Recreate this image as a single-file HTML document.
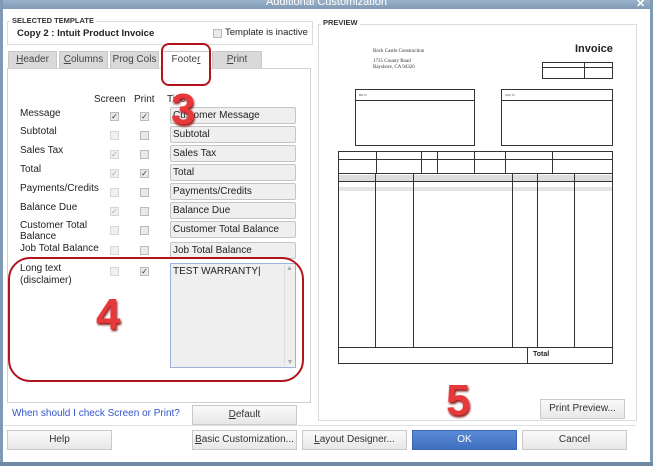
<!DOCTYPE html>
<html><head><meta charset="utf-8"><style>
*{box-sizing:border-box;margin:0;padding:0}
body{width:653px;height:466px;overflow:hidden;background:#fff;font-family:"Liberation Sans",Arial,sans-serif;font-size:10px;color:#222;position:relative}
.a{position:absolute}
.title{left:0;top:0;width:653px;height:9px;background:linear-gradient(#9cb3c9,#7f9ab5);}
.frameL{left:0;top:0;width:3px;height:466px;background:#7f9ab5}
.frameR{right:0;top:0;width:3px;height:466px;background:#7f9ab5}
.frameB{left:0;bottom:0;width:653px;height:4px;background:#6f8aa5}
.grp{border:1px solid #dcdcdc}
.lbl{font-size:7.5px;font-weight:bold;background:#fff;padding:0 2px;color:#333}
.tab{top:51px;height:17px;background:#d9d9d9;border:1px solid #c8c8c8;border-bottom:none;text-align:center;font-size:10px;line-height:16px;color:#444}
.cb{width:9px;height:9px;border:1px solid #bbb;background:#e9e9e9;font-size:8px;line-height:7px;text-align:center;color:#333}
.cb.d{background:#f0f0f0;border-color:#d6d6d6;color:#aaa}
.fld{left:170px;width:126px;height:17px;border:1px solid #c5c5c5;background:#efefef;border-radius:2px;padding-left:2px;line-height:15px;font-size:10px}
.rl{left:20px;font-size:10px}
.btn{height:20px;border:1px solid #c9c9c9;background:linear-gradient(#fafafa,#e8e8e8);text-align:center;line-height:18px;font-size:10px;color:#333}
.num{font-weight:bold;color:#e8383a;font-size:44px;text-shadow:1px 2px 2px #8a1a1a;font-family:"Liberation Sans",sans-serif}
.t{font-size:3px;color:#555;text-align:center}
.ln{background:#333}
</style></head><body>
<div class="a title"></div>
<div class="a" style="left:0;top:-4px;width:653px;text-align:center;color:#fff;font-size:11px">Additional Customization</div>
<div class="a" style="left:636px;top:-3px;color:#fff;font-size:11px;font-weight:bold">✕</div>
<div class="a frameL"></div><div class="a frameR"></div><div class="a frameB"></div>

<div class="a grp" style="left:7px;top:21px;width:306px;height:24px"></div>
<div class="a lbl" style="left:10px;top:16px">SELECTED TEMPLATE</div>
<div class="a" style="left:17px;top:28px;font-weight:bold;font-size:9.5px">Copy 2 : Intuit Product Invoice</div>
<div class="a cb" style="left:213px;top:29px"></div>
<div class="a" style="left:225px;top:27px;font-size:9.5px">Template is inactive</div>

<div class="a tab" style="left:8px;width:49px"><u>H</u>eader</div>
<div class="a tab" style="left:59px;width:49px"><u>C</u>olumns</div>
<div class="a tab" style="left:110px;width:49px">Pro<u>g</u> Cols</div>
<div class="a tab" style="left:161px;width:50px;background:#fff;height:18px">Foote<u>r</u></div>
<div class="a tab" style="left:212px;width:50px"><u>P</u>rint</div>
<div class="a grp" style="left:7px;top:68px;width:304px;height:335px;border-color:#d0d0d0"></div>
<div class="a" style="left:162px;top:67px;width:48px;height:2px;background:#fff"></div>

<div class="a" style="left:94px;top:94px">Screen</div>
<div class="a" style="left:134px;top:94px">Print</div>
<div class="a" style="left:167px;top:94px">Title</div>

<div class="a rl" style="top:108px">Message</div>
<div class="a rl" style="top:126px">Subtotal</div>
<div class="a rl" style="top:145px">Sales Tax</div>
<div class="a rl" style="top:164px">Total</div>
<div class="a rl" style="top:183px">Payments/Credits</div>
<div class="a rl" style="top:202px">Balance Due</div>
<div class="a rl" style="top:220px;line-height:11px">Customer Total<br>Balance</div>
<div class="a rl" style="top:243px">Job Total Balance</div>
<div class="a rl" style="top:263px;line-height:12px">Long text<br>(disclaimer)</div>

<div class="a cb" style="left:110px;top:112px">✓</div><div class="a cb" style="left:140px;top:112px">✓</div>
<div class="a cb d" style="left:110px;top:131px"></div><div class="a cb" style="left:140px;top:131px"></div>
<div class="a cb d" style="left:110px;top:150px">✓</div><div class="a cb" style="left:140px;top:150px"></div>
<div class="a cb d" style="left:110px;top:169px">✓</div><div class="a cb" style="left:140px;top:169px">✓</div>
<div class="a cb d" style="left:110px;top:188px"></div><div class="a cb" style="left:140px;top:188px"></div>
<div class="a cb d" style="left:110px;top:207px">✓</div><div class="a cb" style="left:140px;top:207px"></div>
<div class="a cb d" style="left:110px;top:226px"></div><div class="a cb" style="left:140px;top:226px"></div>
<div class="a cb d" style="left:110px;top:246px"></div><div class="a cb" style="left:140px;top:246px"></div>
<div class="a cb d" style="left:110px;top:267px"></div><div class="a cb" style="left:140px;top:267px">✓</div>

<div class="a fld" style="top:107px">Customer Message</div>
<div class="a fld" style="top:126px">Subtotal</div>
<div class="a fld" style="top:145px">Sales Tax</div>
<div class="a fld" style="top:164px">Total</div>
<div class="a fld" style="top:183px">Payments/Credits</div>
<div class="a fld" style="top:202px">Balance Due</div>
<div class="a fld" style="top:221px">Customer Total Balance</div>
<div class="a fld" style="top:242px">Job Total Balance</div>
<div class="a" style="left:170px;top:263px;width:126px;height:105px;border:1px solid #9db3d6;background:#efefef;padding:2px 2px;font-size:10px">TEST WARRANTY|</div>
<div class="a" style="left:284px;top:265px;width:10px;height:101px;border-left:1px solid #ddd;color:#aaa;font-size:7px;text-align:center">▲<div style="position:absolute;bottom:0;width:10px">▼</div></div>

<div class="a" style="left:8px;top:257px;width:296px;height:125px;border:2px solid #b3141c;border-radius:22px"></div>
<div class="a" style="left:161px;top:43px;width:50px;height:43px;border:2px solid #b3141c;border-radius:8px"></div>
<div class="a num" style="left:171px;top:85px">3</div>
<div class="a num" style="left:96px;top:290px">4</div>
<div class="a num" style="left:446px;top:376px">5</div>

<div class="a" style="left:12px;top:408px;color:#3355cc;font-size:10px">When should I check Screen or Print?</div>
<div class="a btn" style="left:192px;top:405px;width:105px"><u>D</u>efault</div>

<!-- preview -->
<div class="a grp" style="left:318px;top:24px;width:319px;height:397px"></div>
<div class="a lbl" style="left:321px;top:18px">PREVIEW</div>
<div class="a" style="left:373px;top:49px;font-family:'Liberation Serif',serif;font-size:5px;line-height:6px;color:#333">Rock Castle Construction</div>
<div class="a" style="left:373px;top:59px;font-family:'Liberation Serif',serif;font-size:5px;line-height:6px;color:#333">1735 County Road<br>Bayshore, CA 94326</div>
<div class="a" style="left:575px;top:43px;font-weight:bold;font-size:11px">Invoice</div>
<div class="a" style="left:542px;top:62px;width:71px;height:17px;border:1px solid #333"></div>
<div class="a ln" style="left:542px;top:67px;width:71px;height:1px"></div>
<div class="a ln" style="left:584px;top:62px;width:1px;height:17px"></div>
<div class="a" style="left:355px;top:89px;width:120px;height:57px;border:1px solid #333"></div>
<div class="a ln" style="left:355px;top:100px;width:120px;height:1px"></div>
<div class="a" style="left:501px;top:89px;width:112px;height:57px;border:1px solid #333"></div>
<div class="a ln" style="left:501px;top:100px;width:112px;height:1px"></div>
<div class="a t" style="left:359px;top:93px">Bill To</div>
<div class="a t" style="left:505px;top:93px">Ship To</div>
<div class="a" style="left:338px;top:151px;width:275px;height:213px;border:1px solid #333"></div>
<div class="a ln" style="left:338px;top:159px;width:275px;height:1px"></div>
<div class="a ln" style="left:338px;top:173px;width:275px;height:1px"></div>
<div class="a" style="left:339px;top:175px;width:273px;height:6px;background:#ddd"></div>
<div class="a ln" style="left:338px;top:181px;width:275px;height:1px"></div>
<div class="a" style="left:339px;top:187px;width:273px;height:4px;background:#e4e4e4"></div>
<div class="a ln" style="left:376px;top:151px;width:1px;height:22px"></div>
<div class="a ln" style="left:421px;top:151px;width:1px;height:22px"></div>
<div class="a ln" style="left:437px;top:151px;width:1px;height:22px"></div>
<div class="a ln" style="left:474px;top:151px;width:1px;height:22px"></div>
<div class="a ln" style="left:505px;top:151px;width:1px;height:22px"></div>
<div class="a ln" style="left:552px;top:151px;width:1px;height:22px"></div>
<div class="a ln" style="left:375px;top:173px;width:1px;height:174px"></div>
<div class="a ln" style="left:413px;top:173px;width:1px;height:174px"></div>
<div class="a ln" style="left:512px;top:173px;width:1px;height:174px"></div>
<div class="a ln" style="left:537px;top:173px;width:1px;height:174px"></div>
<div class="a ln" style="left:574px;top:173px;width:1px;height:174px"></div>
<div class="a ln" style="left:338px;top:347px;width:275px;height:1px"></div>
<div class="a ln" style="left:527px;top:347px;width:1px;height:17px"></div>
<div class="a" style="left:533px;top:351px;font-weight:bold;font-size:7px">Total</div>
<div class="a btn" style="left:540px;top:399px;width:85px">Print Preview...</div>

<div class="a" style="left:4px;top:425px;width:632px;height:1px;background:#e0e0e0"></div>
<div class="a btn" style="left:7px;top:430px;width:105px">Help</div>
<div class="a btn" style="left:192px;top:430px;width:105px"><u>B</u>asic Customization...</div>
<div class="a btn" style="left:302px;top:430px;width:105px"><u>L</u>ayout Designer...</div>
<div class="a btn" style="left:412px;top:430px;width:105px;background:linear-gradient(#5b8ad6,#3f6fc0);border-color:#3a66b5;color:#fff">OK</div>
<div class="a btn" style="left:522px;top:430px;width:105px">Cancel</div>
</body></html>
